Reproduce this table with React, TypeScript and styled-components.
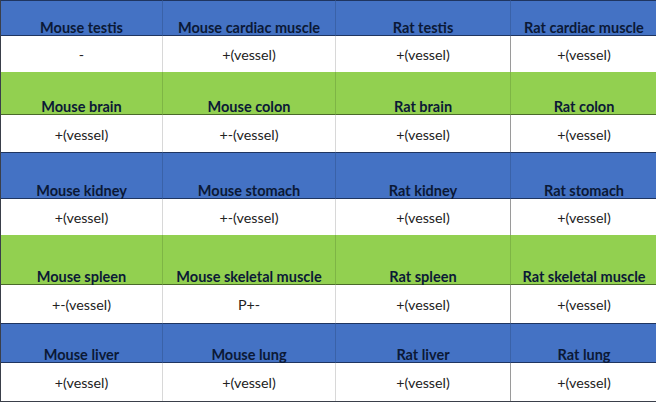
import React from "react";
import styled, { createGlobalStyle } from "styled-components";

const Global = createGlobalStyle`
  html, body { margin: 0; padding: 0; background: #ffffff; }
  body { font-family: Lato, "Open Sans", "Liberation Sans", sans-serif; }
`;

const Sheet = styled.div`
  width: 656px;
  display: grid;
  grid-template-columns: 162px 173px 175px 146px;
  box-sizing: border-box;
  border-left: 1px solid #3a3f4a;
  border-right: 1px solid #3a3f4a;
  border-bottom: 1px solid #3a3f4a;
`;

type Tone = "blue" | "green";

const HeadCell = styled.div<{ $tone: Tone; $h: number; $last: boolean }>`
  height: ${(p) => p.$h}px;
  box-sizing: border-box;
  background: ${(p) => (p.$tone === "blue" ? "#4472c4" : "#92d050")};
  border-bottom: 1px solid ${(p) => (p.$tone === "blue" ? "#1f3560" : "#4a6a2a")};
  border-top: ${(p) => (p.$tone === "blue" ? "1px solid #1f3560" : "none")};
  border-right: ${(p) => (p.$last ? "none" : `1px solid ${p.$tone === "blue" ? "#3a62a8" : "#7eb545"}`)};
  display: flex;
  align-items: flex-end;
  justify-content: center;
  padding-bottom: 0;
  font-weight: 700;
  font-size: 14.5px;
  line-height: 14px;
  color: #0b1936;
  white-space: nowrap;
`;

const DataCell = styled.div<{ $h: number; $last: boolean; $dark: boolean }>`
  height: ${(p) => p.$h}px;
  box-sizing: border-box;
  background: #ffffff;
  border-right: ${(p) => (p.$last ? "none" : `1px solid ${p.$dark ? "#9a9a9a" : "#d8d8d8"}`)};
  display: flex;
  align-items: center;
  justify-content: center;
  padding-top: 1px;
  font-size: 14.3px;
  color: #222222;
  white-space: nowrap;
`;

type Block = { tone: Tone; headH: number; dataH: number; heads: string[]; data: string[] };

const blocks: Block[] = [
  {
    tone: "blue",
    headH: 36,
    dataH: 36,
    heads: ["Mouse testis", "Mouse cardiac muscle", "Rat testis", "Rat cardiac muscle"],
    data: ["-", "+(vessel)", "+(vessel)", "+(vessel)"],
  },
  {
    tone: "green",
    headH: 43,
    dataH: 37,
    heads: ["Mouse brain", "Mouse colon", "Rat brain", "Rat colon"],
    data: ["+(vessel)", "+-(vessel)", "+(vessel)", "+(vessel)"],
  },
  {
    tone: "blue",
    headH: 47,
    dataH: 36,
    heads: ["Mouse kidney", "Mouse stomach", "Rat kidney", "Rat stomach"],
    data: ["+(vessel)", "+-(vessel)", "+(vessel)", "+(vessel)"],
  },
  {
    tone: "green",
    headH: 50,
    dataH: 38,
    heads: ["Mouse spleen", "Mouse skeletal muscle", "Rat spleen", "Rat skeletal muscle"],
    data: ["+-(vessel)", "P+-", "+(vessel)", "+(vessel)"],
  },
  {
    tone: "blue",
    headH: 40,
    dataH: 38,
    heads: ["Mouse liver", "Mouse lung", "Rat liver", "Rat lung"],
    data: ["+(vessel)", "+(vessel)", "+(vessel)", "+(vessel)"],
  },
];

export default function App() {
  return (
    <>
      <Global />
      <Sheet>
        {blocks.map((b, bi) => (
          <React.Fragment key={bi}>
            {b.heads.map((h, i) => (
              <HeadCell key={`h${i}`} $tone={b.tone} $h={b.headH} $last={i === 3}>
                {h}
              </HeadCell>
            ))}
            {b.data.map((d, i) => (
              <DataCell key={`d${i}`} $h={b.dataH} $last={i === 3} $dark={i === 2}>
                {d}
              </DataCell>
            ))}
          </React.Fragment>
        ))}
      </Sheet>
    </>
  );
}
